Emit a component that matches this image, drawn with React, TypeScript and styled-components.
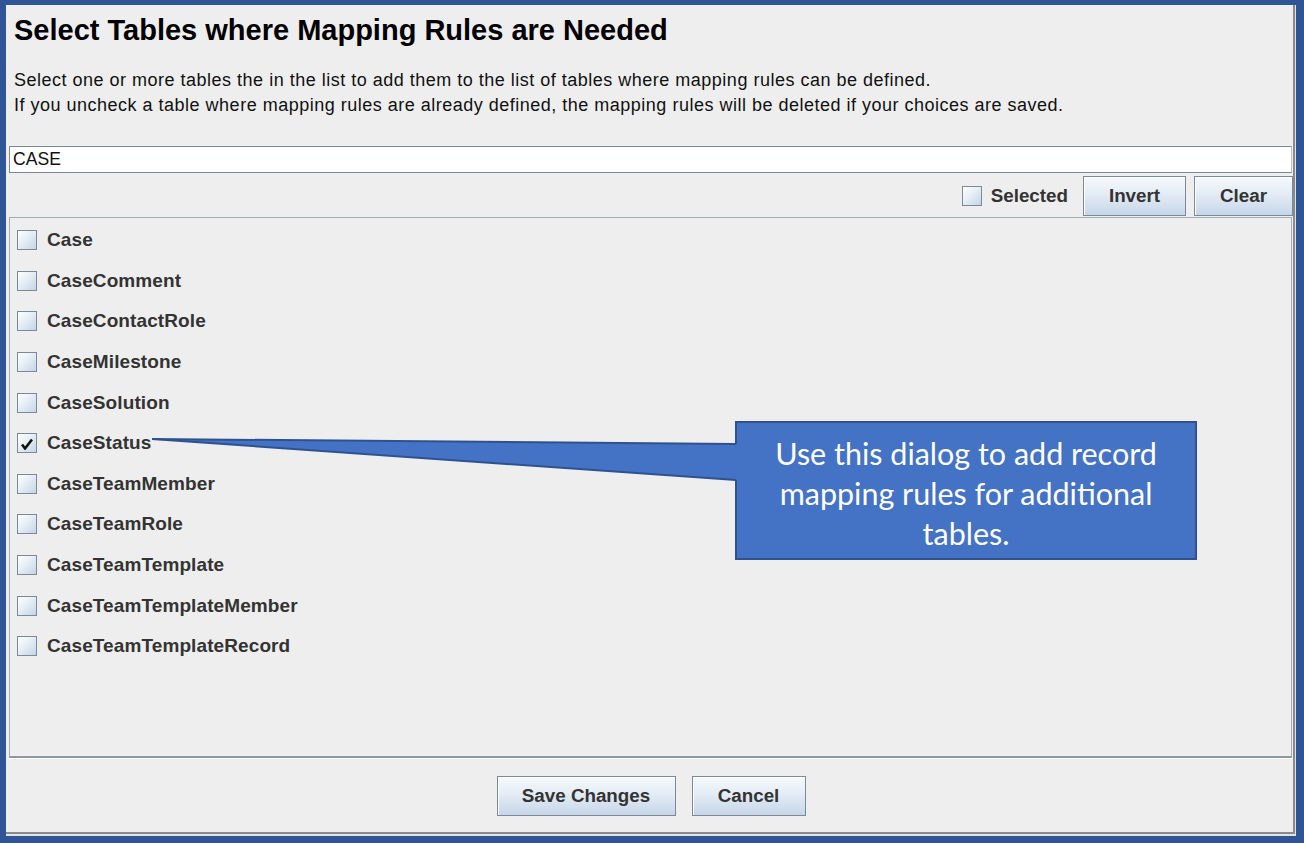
import styled, { createGlobalStyle } from "styled-components";

const tables = [
    "Case",
    "CaseComment",
    "CaseContactRole",
    "CaseMilestone",
    "CaseSolution",
    "CaseStatus",
    "CaseTeamMember",
    "CaseTeamRole",
    "CaseTeamTemplate",
    "CaseTeamTemplateMember",
    "CaseTeamTemplateRecord",
];

const checked = ["CaseStatus"];

const GlobalStyle = createGlobalStyle`
    html, body {
        margin: 0;
        padding: 0;
        background: #EEEEEE;
    }
    * {
        box-sizing: border-box;
    }
`;

const Frame = styled.div`
    position: relative;
    display: flex;
    width: 1304px;
    height: 843px;
    border-style: solid;
    border-color: #2F5597;
    border-width: 5px 8px 7px 6px;
    background: #E2E2E2;
    font-family: "Liberation Sans", Arial, sans-serif;
    overflow: hidden;
`;

const Dialog = styled.div`
    flex: 1;
    display: flex;
    flex-direction: column;
    margin: 0 1px 2px 0;
    padding-left: 3px;
    background: #EEEEEE;
    border-right: 2px solid #8A8A8A;
    border-bottom: 2px solid #8A8A8A;
`;

const Header = styled.div`
    display: flex;
    flex-direction: column;
    padding: 8px 0 0 5px;
`;

const Title = styled.h1`
    margin: 0;
    font-size: 29px;
    line-height: 34px;
    font-weight: bold;
    color: #000;
`;

const Description = styled.p`
    margin: 21px 0 0;
    font-size: 18px;
    letter-spacing: 0.5px;
    line-height: 25px;
    color: #111;
`;

const SearchField = styled.div`
    height: 27px;
    margin: 28px 1px 0 0;
    padding-left: 3px;
    display: flex;
    align-items: center;
    background: #fff;
    border: 1px solid #7A8A99;
    border-right-color: #B8C2CC;
    font-size: 17.6px;
    color: #111;
`;

const Toolbar = styled.div`
    height: 44px;
    display: flex;
    align-items: center;
    justify-content: flex-end;
    gap: 8px;
    padding-top: 2px;
`;

const ToggleLabel = styled.label`
    display: flex;
    align-items: center;
    gap: 9px;
    margin-right: 7px;
    font-size: 18.8px;
    font-weight: bold;
    color: #333;
`;

const Box = styled.span`
    position: relative;
    display: inline-flex;
    width: 20px;
    height: 20px;
    flex: none;
    border: 1px solid #7A8A99;
    background: linear-gradient(135deg, #FFFFFF 0%, #E6EEF6 45%, #C4D4E6 100%);
`;

const Tick = styled.svg`
    position: absolute;
    left: 3px;
    top: 4px;
`;

const Button = styled.button<{ $w: number }>`
    width: ${(p) => p.$w}px;
    height: 40px;
    padding: 0;
    border: 1px solid #7A8A99;
    background: linear-gradient(to bottom, #F6F9FC 0%, #E4ECF5 45%, #C6D6E8 100%);
    font-family: "Liberation Sans", Arial, sans-serif;
    font-size: 18.8px;
    font-weight: bold;
    color: #333;
    box-shadow: inset 1px 1px 0 #fff;
`;

const TableList = styled.div`
    height: 541px;
    margin-right: 1px;
    padding-top: 2px;
    display: flex;
    flex-direction: column;
    border: 1px solid #A3ADB7;
    border-bottom: 2px solid #8E99A4;
`;

const Row = styled.div`
    height: 40.6px;
    display: flex;
    align-items: center;
    gap: 10px;
    padding-left: 7px;
    font-size: 19px;
    letter-spacing: 0.1px;
    font-weight: bold;
    color: #333;
`;

const Footer = styled.div`
    flex: 1;
    display: flex;
    align-items: center;
    justify-content: center;
    gap: 16px;
    border-top: 1px solid #fff;
`;

const Pointer = styled.svg`
    position: absolute;
    left: -6px;
    top: -5px;
    pointer-events: none;
    z-index: 2;
`;

const Callout = styled.div`
    position: absolute;
    left: 729px;
    top: 416px;
    width: 462px;
    height: 139px;
    padding-top: 10px;
    z-index: 1;
    background: #4472C4;
    border: 2px solid #2F528F;
    font-family: Lato, "Noto Sans", sans-serif;
    font-size: 30.5px;
    line-height: 40px;
    color: #fff;
    text-align: center;
`;

function CheckBox({ on }: { on?: boolean }) {
    return (
        <Box>
            {on && (
                <Tick width="12" height="12" viewBox="0 0 12 12">
                    <path d="M1 6.5 L4 10.5 L11 1.5" fill="none" stroke="#111" strokeWidth="2.6" strokeLinejoin="miter" />
                </Tick>
            )}
        </Box>
    );
}

function App() {
    return (
        <Frame>
            <GlobalStyle />
            <Dialog>
                <Header>
                    <Title>Select Tables where Mapping Rules are Needed</Title>
                    <Description>
                        Select one or more tables the in the list to add them to the list of tables where mapping rules can be defined.
                        <br />
                        If you uncheck a table where mapping rules are already defined, the mapping rules will be deleted if your choices are saved.
                    </Description>
                </Header>
                <SearchField>CASE</SearchField>
                <Toolbar>
                    <ToggleLabel>
                        <CheckBox />
                        Selected
                    </ToggleLabel>
                    <Button $w={103}>Invert</Button>
                    <Button $w={99}>Clear</Button>
                </Toolbar>
                <TableList>
                    {tables.map((name) => (
                        <Row key={name}>
                            <CheckBox on={checked.includes(name)} />
                            {name}
                        </Row>
                    ))}
                </TableList>
                <Footer>
                    <Button $w={179}>Save Changes</Button>
                    <Button $w={114}>Cancel</Button>
                </Footer>
            </Dialog>
            <Callout>
                Use this dialog to add record
                <br />
                mapping rules for additional
                <br />
                tables.
            </Callout>
            <Pointer width="1304" height="843" viewBox="0 0 1304 843">
                <polygon points="152,439 739,444 739,480" fill="#4472C4" />
                <line x1="152" y1="439" x2="736" y2="444" stroke="#2F528F" strokeWidth="2" />
                <line x1="152" y1="439" x2="736" y2="480" stroke="#2F528F" strokeWidth="2" />
            </Pointer>
        </Frame>
    );
}

export default App;
